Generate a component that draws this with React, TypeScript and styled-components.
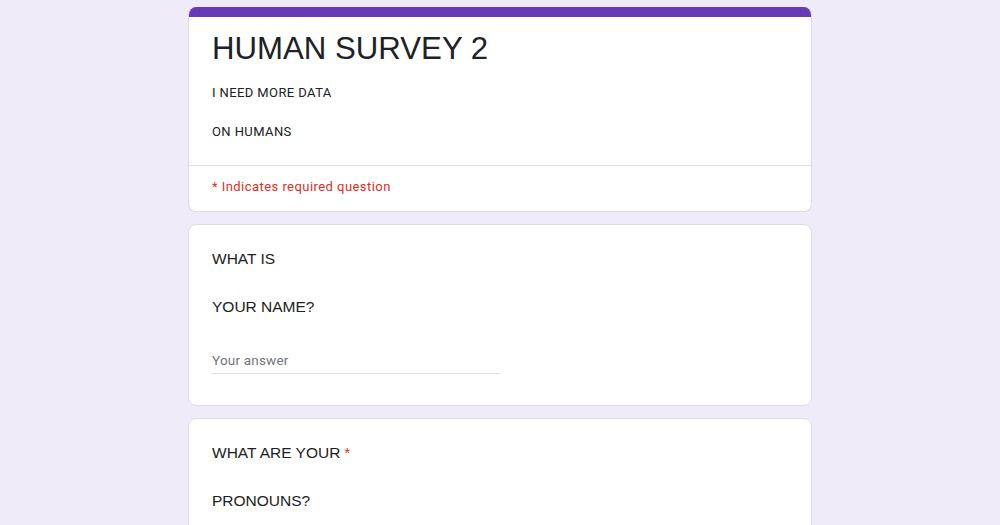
import React from "react";
import styled, { createGlobalStyle } from "styled-components";

const Global = createGlobalStyle`
  html, body { margin: 0; padding: 0; background: #f0ebf8; }
  body { font-family: Roboto, "Liberation Sans", Arial, sans-serif; }
`;

const Page = styled.div`
  display: flex;
  flex-direction: column;
  align-items: center;
  gap: 12px;
  padding-top: 7px;
  min-height: 525px;
  box-sizing: border-box;
`;

const Card = styled.section`
  width: 624px;
  box-sizing: border-box;
  background: #ffffff;
  border: 1px solid #dadce0;
  border-radius: 8px;
  overflow: hidden;
`;

const HeaderCard = styled(Card)`
  border-top: none;
`;

const AccentBar = styled.div`
  height: 10px;
  background: #673ab7;
`;

const HeaderBody = styled.div`
  padding: 12px 23px 23px;
  border-bottom: 1px solid #dadce0;
`;

const Title = styled.h1`
  margin: 0;
  font-family: "Liberation Sans", Arial, sans-serif;
  font-weight: 400;
  font-size: 31.2px;
  line-height: 40px;
  color: #202124;
`;

const Description = styled.div`
  margin-top: 14px;
  display: flex;
  flex-direction: column;
  gap: 19px;
  font-size: 13px;
  line-height: 20px;
  color: #202124;
  letter-spacing: 0.4px;
`;

const Required = styled.div`
  padding: 11px 23px 14px;
  font-size: 13px;
  line-height: 20px;
  color: #d93025;
  letter-spacing: 0.45px;
`;

const QuestionBody = styled.div<{ $bottom?: number }>`
  padding: 22px 23px ${(p) => p.$bottom ?? 31}px;
`;

const QuestionTitle = styled.div`
  display: flex;
  flex-direction: column;
  gap: 24px;
  font-family: "Liberation Sans", Arial, sans-serif;
  font-size: 15.5px;
  line-height: 24px;
  color: #202124;
`;

const Star = styled.span`
  color: #d93025;
  margin-left: 4px;
`;

const Answer = styled.div`
  margin-top: 31px;
  width: 288px;
  padding-bottom: 3px;
  border-bottom: 1px solid #e0e0e0;
  font-size: 13.5px;
  line-height: 20px;
  color: #70757a;
  letter-spacing: 0.2px;
`;

export default function App() {
  return (
    <>
      <Global />
      <Page>
        <HeaderCard>
          <AccentBar />
          <HeaderBody>
            <Title>HUMAN SURVEY 2</Title>
            <Description>
              <span>I NEED MORE DATA</span>
              <span>ON HUMANS</span>
            </Description>
          </HeaderBody>
          <Required>* Indicates required question</Required>
        </HeaderCard>
        <Card>
          <QuestionBody>
            <QuestionTitle>
              <span>WHAT IS</span>
              <span>YOUR NAME?</span>
            </QuestionTitle>
            <Answer>Your answer</Answer>
          </QuestionBody>
        </Card>
        <Card>
          <QuestionBody $bottom={40}>
            <QuestionTitle>
              <span>
                WHAT ARE YOUR<Star>*</Star>
              </span>
              <span>PRONOUNS?</span>
            </QuestionTitle>
          </QuestionBody>
        </Card>
      </Page>
    </>
  );
}
